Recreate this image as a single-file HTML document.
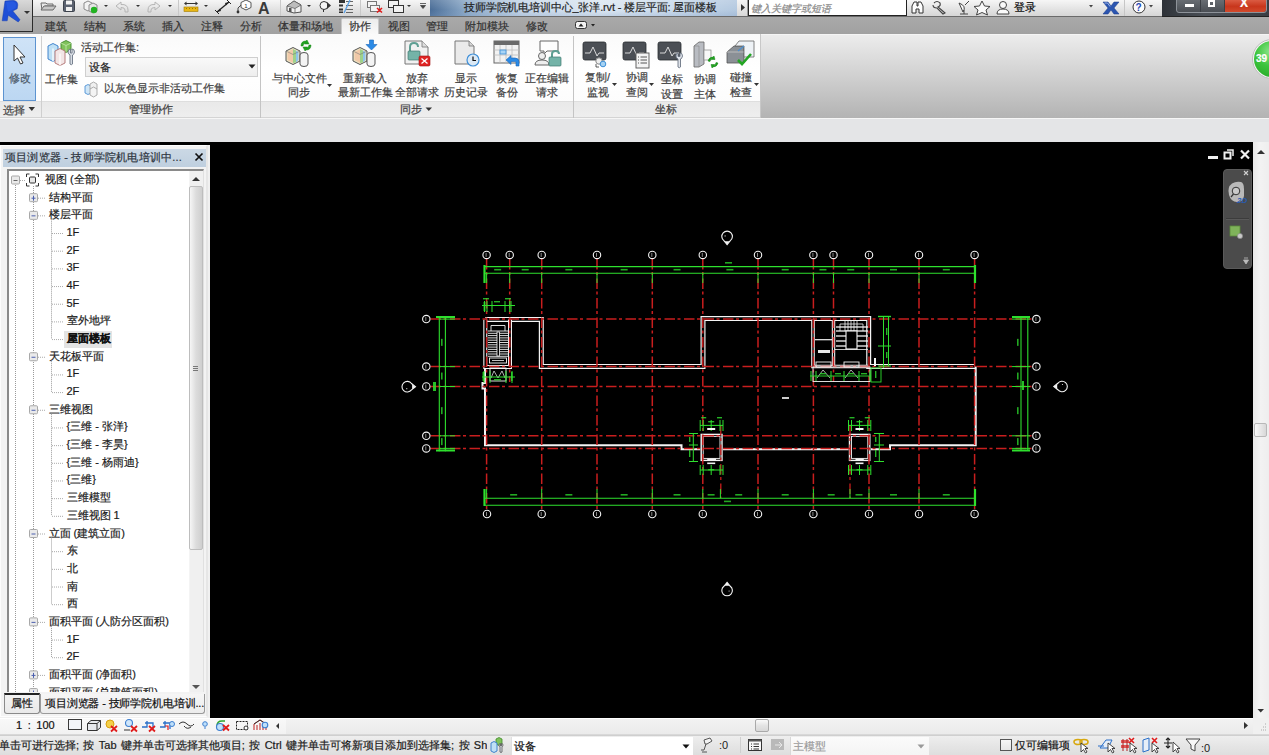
<!DOCTYPE html>
<html><head><meta charset="utf-8">
<style>
*{box-sizing:border-box}
html,body{margin:0;padding:0;width:1269px;height:755px;overflow:hidden;background:#000;font-family:"Liberation Sans",sans-serif;font-size:11px;color:#222}
.a{position:absolute}
.t{position:absolute;white-space:nowrap;line-height:13px;-webkit-text-stroke:0.2px}
svg{position:absolute;overflow:visible}
</style></head><body>
<div class="a" style="left:0;top:0;width:1269px;height:755px;overflow:hidden">
<!-- QAT bar -->
<div class="a" style="left:0;top:0;width:1269px;height:17px;background:linear-gradient(#f6f6f6,#e2e2e2 60%,#d6d6d6);border-bottom:1px solid #6a6a6a"></div>
<!-- QAT icons -->
<svg style="left:33px;top:0" width="400" height="17" viewBox="0 0 400 17">
 <!-- open folder -->
 <path d="M8 3 L13 3 L14 4 L20 4 L20 6 L12 6 L9 10 Z" fill="#e8e8e8" stroke="#6b6b6b" stroke-width="1"/>
 <path d="M8 10 L11 6 L23 6 L20 10 Z" fill="#c8c8c8" stroke="#6b6b6b" stroke-width="1"/>
 <!-- save -->
 <rect x="30.5" y="0.5" width="11" height="11" rx="1" fill="#5b6270" stroke="#3c424c"/>
 <rect x="33" y="0.5" width="6" height="4" fill="#f4f4f4"/>
 <rect x="33" y="7" width="6" height="4" fill="#f0f0f0"/>
 <!-- sync -->
 <path d="M51 3 L55 1 L59 3 L59 9 L55 11 L51 9 Z" fill="#f2f2f2" stroke="#8a8a8a"/>
 <path d="M56 5 L60 3 L64 5 L64 11 L60 13 L56 11 Z" fill="#e6e6e6" stroke="#8a8a8a"/>
 <circle cx="61" cy="10" r="3.2" fill="#21b321"/>
 <path d="M71 5 L75 5 L73 7 Z" fill="#333"/>
 <!-- undo -->
 <path d="M83 6 L88 2 L88 4.5 Q95 4 95 10 L95 12 L92 12 L92 10 Q92 7.5 88 7.5 L88 10 Z" fill="none" stroke="#b5b5b5" stroke-width="1"/>
 <path d="M103 5 L107 5 L105 7 Z" fill="#333"/>
 <!-- redo -->
 <path d="M127 6 L122 2 L122 4.5 Q115 4 115 10 L115 12 L118 12 L118 10 Q118 7.5 122 7.5 L122 10 Z" fill="none" stroke="#b5b5b5" stroke-width="1"/>
 <path d="M135 5 L139 5 L137 7 Z" fill="#333"/>
 <line x1="145.5" y1="0" x2="145.5" y2="16" stroke="#c9c9c9"/>
 <!-- aligned dim -->
 <rect x="151" y="7" width="14" height="4.5" fill="#e8b614" stroke="#a07a00" stroke-width="0.6"/>
 <path d="M153 8.5 L154 8.5 M156 8.5 L157 8.5 M159 8.5 L160 8.5 M162 8.5 L163 8.5" stroke="#a07a00"/>
 <line x1="152" y1="3.5" x2="164" y2="3.5" stroke="#333" stroke-width="1"/>
 <path d="M151 3.5 L153.5 1.5 L153.5 5.5 Z M165 3.5 L162.5 1.5 L162.5 5.5 Z" fill="#333"/>
 <path d="M171 5 L175 5 L173 7 Z" fill="#333"/>
 <!-- linear dim -->
 <line x1="184" y1="12" x2="196" y2="2" stroke="#222" stroke-width="1.2"/>
 <path d="M184 12 L187 8.5 L188 11 Z M196 2 L193 5.5 L192 3 Z" fill="#222"/>
 <line x1="182" y1="10" x2="186" y2="14" stroke="#222"/>
 <line x1="194" y1="0" x2="198" y2="4" stroke="#222"/>
 <!-- tag -->
 <path d="M205 13 L205 8 L208 5" fill="none" stroke="#444" stroke-width="1"/>
 <circle cx="205" cy="12" r="1.4" fill="#333"/>
 <path d="M208 2.5 L213 0 L218 2.5 L218 7.5 L213 10 L208 7.5 Z" fill="#fff" stroke="#555"/>
 <text x="211.3" y="8" font-family="Liberation Sans" font-size="6" fill="#333">1</text>
 <!-- A text -->
 <text x="225" y="14" font-family="Liberation Sans" font-weight="bold" font-size="16" fill="#3a3a3a">A</text>
 <line x1="247.5" y1="0" x2="247.5" y2="16" stroke="#c9c9c9"/>
 <!-- house 3D -->
 <path d="M254 6 L261 1 L268 5 L268 12 L261 13 L254 11 Z" fill="#f1f1f1" stroke="#555"/>
 <path d="M254 6 L261 1 L268 5 L262 8.5 Z" fill="#bdbdbd" stroke="#555" stroke-width="0.7"/>
 <path d="M262 8.5 L262 13" stroke="#555" stroke-width="0.7"/>
 <rect x="256" y="8" width="2.5" height="4" fill="#555"/>
 <path d="M274 5 L278 5 L276 7 Z" fill="#333"/>
 <!-- section -->
 <circle cx="291" cy="5.5" r="4" fill="#f4f4f4" stroke="#333"/>
 <path d="M294 2 L298 5.5 L294 9 Z" fill="#333"/>
 <line x1="290.5" y1="9.5" x2="290.5" y2="12" stroke="#333"/>
 <!-- thin lines -->
 <rect x="306" y="0" width="6" height="3" fill="#333"/>
 <rect x="306" y="4.5" width="4" height="2" fill="#333"/>
 <rect x="306" y="8.5" width="4" height="2" fill="#333"/>
 <rect x="306" y="11.5" width="4" height="1.5" fill="#333"/>
 <line x1="313" y1="1.5" x2="320" y2="1.5" stroke="#666"/><line x1="313" y1="5.5" x2="320" y2="5.5" stroke="#666"/><line x1="313" y1="9.5" x2="320" y2="9.5" stroke="#666"/><line x1="313" y1="12.5" x2="320" y2="12.5" stroke="#666"/>
 <line x1="317" y1="0" x2="311" y2="13" stroke="#5aa0e6" stroke-width="1.3"/>
 <line x1="327.5" y1="0" x2="327.5" y2="16" stroke="#c9c9c9"/>
 <!-- close hidden -->
 <rect x="334.5" y="1.5" width="9" height="6" fill="#f4f4f4" stroke="#777"/>
 <rect x="337.5" y="5.5" width="9" height="6" fill="#f4f4f4" stroke="#777"/>
 <path d="M344 8 L349 12.5 M349 8 L344 12.5" stroke="#e01818" stroke-width="1.6"/>
 <!-- switch windows -->
 <rect x="355.5" y="0.5" width="10" height="7" fill="#f2f2f2" stroke="#333"/>
 <rect x="360.5" y="5.5" width="10" height="7" fill="#f2f2f2" stroke="#333"/>
 <path d="M374 5 L378 5 L376 7 Z" fill="#333"/>
 <path d="M387 3.5 L393 3.5 M387.5 5.5 L392.5 5.5 L390 8.5 Z" stroke="#444" fill="#444" stroke-width="0.8"/>
</svg>
<!-- title area -->
<div class="a" style="left:430px;top:0;width:307px;height:16px;background:linear-gradient(90deg,#4a6d97 0%,#8eabc9 12%,#c7d7e8 30%,#dde8f2 55%,#cfdeee 75%,#b4c9e0 100%)"></div>
<div class="a" style="left:430px;top:0;width:307px;height:16px;background:linear-gradient(rgba(255,255,255,0.15),rgba(255,255,255,0) 60%,rgba(120,150,190,0.25))"></div>
<div class="t" style="left:464px;top:1px;font-size:11px;color:#262626;letter-spacing:-0.15px">技师学院机电培训中心_张洋.rvt - 楼层平面: 屋面楼板</div>
<!-- search -->
<div class="a" style="left:737px;top:0;width:11px;height:16px;background:linear-gradient(#f4f4f4,#d8d8d8);border-right:1px solid #999"></div>
<svg style="left:737px;top:0" width="11" height="16"><path d="M4 4 L8 7.5 L4 11 Z" fill="#333"/></svg>
<div class="a" style="left:748px;top:0;width:159px;height:16px;background:#fff;border:1px solid #222;border-top:none"></div>
<div class="t" style="left:751px;top:2px;font-size:10px;color:#8a8a8a;font-style:italic">键入关键字或短语</div>
<!-- right tool icons -->
<svg style="left:907px;top:0" width="256" height="17" viewBox="0 0 256 17">
 <!-- binoculars -->
 <path d="M5 13 L5 6 L7 2 L10 2 L10 6 L11 6 L11 2 L14 2 L16 6 L16 13 L12 13 L12 9 L9 9 L9 13 Z" fill="#fdfdfd" stroke="#333" stroke-width="1"/>
 <!-- wrench key -->
 <path d="M27 3 Q30 0 33 3 Q34 6 31 7 L38 13 L36 14 L30 8 Q26 8 26 5" fill="none" stroke="#444" stroke-width="1.1"/>
 <!-- satellite -->
 <path d="M52 3 Q60 6 56 12 Z" fill="#f7f7f7" stroke="#444"/>
 <path d="M53 14 L61 14 M57 10 L57 14 M58 5 L62 1" stroke="#444" fill="none"/>
 <!-- star -->
 <path d="M75 1 L77.5 6 L83 6.5 L79 10 L80.5 15 L75 12.5 L69.5 15 L71 10 L67 6.5 L72.5 6 Z" fill="#fafafa" stroke="#444" stroke-width="1"/>
 <!-- person -->
 <circle cx="96" cy="5" r="3.5" fill="#fafafa" stroke="#444"/>
 <path d="M90 14 Q90 9 96 9 Q102 9 102 14 Z" fill="#fafafa" stroke="#444"/>
</svg>
<div class="t" style="left:1014px;top:1px;font-size:11px;color:#111">登录</div>
<svg style="left:1085px;top:0" width="80" height="17" viewBox="0 0 80 17">
 <path d="M4 5 L8 5 L6 7.5 Z" fill="#444"/>
 <!-- X exchange -->
 <path d="M18 2 L23 2 L26 6 L29 2 L34 2 L29 8 L34 14 L29 14 L26 10 L23 14 L18 14 L23 8 Z" fill="#2b55b0" stroke="#1a3a88" stroke-width="0.5"/>
 <path d="M19.5 3 L22.5 3 L25 6.5" stroke="#9db4e6" fill="none" stroke-width="1"/>
 <line x1="39.5" y1="0" x2="39.5" y2="16" stroke="#c6c6c6"/>
 <circle cx="54" cy="7" r="6" fill="#fcfcfc" stroke="#333" stroke-width="1"/>
 <text x="50.6" y="11" font-family="Liberation Sans" font-weight="bold" font-size="10" fill="#1f48b8">?</text>
 <path d="M64 5 L68 5 L66 7.5 Z" fill="#444"/>
</svg>
<!-- window controls -->
<div class="a" style="left:1162px;top:0;width:107px;height:17px;background:linear-gradient(90deg,#2e3238,#4a4f56 40%,#3a3e44);border-bottom:1px solid #222"></div>
<div class="a" style="left:1176px;top:-3px;width:91px;height:16px;border:1px solid #8d9299;border-radius:3px;background:linear-gradient(#6d7278,#4a4e54)"></div>
<div class="a" style="left:1225px;top:-2px;width:41px;height:14px;border-radius:0 2px 3px 0;background:linear-gradient(#e0674f,#c8361c 60%,#d24a2c)"></div>
<div class="a" style="left:1200px;top:-2px;width:1px;height:14px;background:#3b3f45"></div>
<div class="a" style="left:1224px;top:-2px;width:1px;height:14px;background:#3b3f45"></div>
<div class="a" style="left:1185px;top:4px;width:9px;height:3px;background:#fff"></div>
<div class="a" style="left:1208px;top:0px;width:7px;height:7px;border:2px solid #fff;border-top-width:2px"></div>
<div class="t" style="left:1240px;top:-3px;font-size:12px;font-weight:bold;color:#fff">X</div>
<!-- tabs row -->
<div class="a" style="left:0;top:17px;width:1269px;height:17px;background:linear-gradient(#a9a9a9,#a1a1a1)"></div>
<div class="a" style="left:341px;top:18px;width:38px;height:17px;background:linear-gradient(#ececec,#fafafa);border:1px solid #c8c8c8;border-bottom:none;border-radius:2px 2px 0 0"></div>
<div class="t" style="left:45px;top:20px;color:#333">建筑</div>
<div class="t" style="left:84px;top:20px;color:#333">结构</div>
<div class="t" style="left:123px;top:20px;color:#333">系统</div>
<div class="t" style="left:162px;top:20px;color:#333">插入</div>
<div class="t" style="left:201px;top:20px;color:#333">注释</div>
<div class="t" style="left:240px;top:20px;color:#333">分析</div>
<div class="t" style="left:278px;top:20px;color:#333">体量和场地</div>
<div class="t" style="left:349px;top:20px;color:#333">协作</div>
<div class="t" style="left:388px;top:20px;color:#333">视图</div>
<div class="t" style="left:426px;top:20px;color:#333">管理</div>
<div class="t" style="left:465px;top:20px;color:#333">附加模块</div>
<div class="t" style="left:526px;top:20px;color:#333">修改</div>
<svg style="left:574px;top:19px" width="30" height="12" viewBox="0 0 30 12">
 <rect x="1.5" y="2.5" width="11" height="7" rx="2" fill="#f4f4f4" stroke="#333"/>
 <path d="M4.5 7.5 L7 4.5 L9.5 7.5 Z" fill="#222"/>
 <path d="M17 5 L21 5 L19 7.5 Z" fill="#222"/>
</svg>

<!-- R button -->
<div class="a" style="left:0;top:0;width:33px;height:32px;background:linear-gradient(#d9d9d9,#bdbdbd 50%,#a8a8a8);border-right:1px solid #2a2a2a;border-bottom:1px solid #2a2a2a"></div>
<svg style="left:0;top:0" width="33" height="32" viewBox="0 0 33 32">
 <path d="M5 1 L13 0.3 Q17.8 1 17.8 5 L17.2 8.7 L12.8 11 L20 19.8 L18.2 22 L8.2 15.2 L7.2 20.8 L2.2 20.8 Z" fill="#1f4fd6" stroke="#163fae" stroke-width="0.5"/>
 <path d="M6 2 L12.5 1.5 Q16 2 16 5 L15.5 8 L12 10 L8 12 Z" fill="#2a5ee6" opacity="0.7"/>
 <path d="M24 11 L30 11 L27 14 Z" fill="#333"/>
</svg>

<!-- ribbon background -->
<div class="a" style="left:0;top:34px;width:1269px;height:84px;background:linear-gradient(#ececec,#d0d0d0 50%,#b3b3b3);border-top:1px solid #f4f4f4"></div>
<div class="a" style="left:0;top:34px;width:761px;height:84px;background:linear-gradient(#fafafa,#ffffff 40%,#fbfbfb)"></div>
<div class="a" style="left:0;top:101px;width:761px;height:17px;background:linear-gradient(#e9e9e9,#eeeeee);border-top:1px solid #dedede;border-bottom:1px solid #d4d4d4"></div>
<div class="a" style="left:41px;top:36px;width:1px;height:82px;background:#cfcfcf"></div>
<div class="a" style="left:260px;top:36px;width:1px;height:82px;background:#c4c4c4"></div>
<div class="a" style="left:573px;top:36px;width:1px;height:82px;background:#c4c4c4"></div>
<div class="a" style="left:760px;top:34px;width:1px;height:84px;background:#c8c8c8"></div>
<!-- modify button -->
<div class="a" style="left:3px;top:37px;width:33px;height:64px;background:linear-gradient(#cfe3f7,#bcd7f2);border:1px solid #5c93d0"></div>
<svg style="left:3px;top:37px" width="33" height="64" viewBox="0 0 33 64">
 <path d="M11 8 L11 24 L14.5 21 L17.5 27 L20 26 L17 20 L22 20 Z" fill="#fff" stroke="#333" stroke-width="1"/>
</svg>
<div class="t" style="left:9px;top:72px;color:#4a5868">修改</div>
<div class="t" style="left:3px;top:104px;color:#3f3f3f">选择</div>
<svg style="left:28px;top:106px" width="8" height="6"><path d="M0.5 1 L7 1 L3.8 5 Z" fill="#333"/></svg>
<!-- worksets icon -->
<svg style="left:46px;top:39px" width="32" height="28" viewBox="0 0 32 28">
 <path d="M15 4 L20 1.5 L25 4 L25 11 L20 13.5 L15 11 Z" fill="#7fc25a" stroke="#3f8a2a" stroke-width="0.9"/>
 <path d="M15 4 L20 6.5 L25 4 M20 6.5 L20 13.5" stroke="#c8eab0" fill="none" stroke-width="0.8"/>
 <path d="M2 7 L7 4.5 L12 7 L12 20 L7 22.5 L2 20 Z" fill="#bfe0f5" stroke="#2f78c8" stroke-width="0.9"/>
 <path d="M7 9.5 L7 22.5" stroke="#fff" stroke-width="1.2"/>
 <path d="M9 12 L14 9.5 L19 12 L19 24 L14 26.5 L9 24 Z" fill="#f3e6e6" stroke="#b07070" stroke-width="0.9"/>
 <path d="M14 14.5 L14 26.5" stroke="#fff" stroke-width="1.2"/>
 <path d="M22 13 Q22 10 24.5 10 L24.5 14 L26 14 L26 10 Q28.5 10 28.5 13 Q28.5 15 26.5 16 L26.5 25 Q25.3 26.5 24 25 L24 16 Q22 15 22 13 Z" fill="#d8dde4" stroke="#6b7585" stroke-width="0.9"/>
</svg>
<div class="t" style="left:45px;top:73px;color:#3f3f3f">工作集</div>
<div class="t" style="left:81px;top:41px;color:#3f3f3f">活动工作集:</div>
<div class="a" style="left:85px;top:57px;width:173px;height:20px;background:linear-gradient(#f9f9f9,#eeeeee);border:1px solid #cfcfcf"></div>
<div class="t" style="left:89px;top:61px;color:#222">设备</div>
<svg style="left:248px;top:64px" width="8" height="6"><path d="M0.5 0.5 L7.5 0.5 L4 4.5 Z" fill="#222"/></svg>
<svg style="left:84px;top:81px" width="18" height="16" viewBox="0 0 18 16">
 <path d="M1 5 L4 3.5 L7 5 L7 12 L4 13.5 L1 12 Z" fill="#cfe6f7" stroke="#3d86d0" stroke-width="0.8"/>
 <path d="M6 3 L9.5 1 L13 3 L13 8 L9.5 10 L6 8 Z" fill="#f0f0f0" stroke="#9a9a9a" stroke-width="0.8"/>
 <path d="M6 8 L9.5 6 L13 8 L13 14 L9.5 16 L6 14 Z" fill="#f4f4f4" stroke="#9a9a9a" stroke-width="0.8"/>
</svg>
<div class="t" style="left:104px;top:82px;color:#444">以灰色显示非活动工作集</div>
<div class="t" style="left:129px;top:103px;color:#3f3f3f">管理协作</div>

<!-- sync panel icons -->
<svg style="left:261px;top:37px" width="312" height="34" viewBox="0 0 312 34">
 <!-- sync with central: x 286-312 -->
 <g transform="translate(24,3)">
  <path d="M1 11 L8 7.5 L15 11 L15 21 L8 24.5 L1 21 Z" fill="#ece6c6" stroke="#555" stroke-width="1"/>
  <path d="M2.5 12 L8 9 L8 23 L2.5 20 Z" fill="#f1c9a8"/>
  <path d="M8 9 L11 10.5 L11 22.5 L8 23 Z" fill="#9fd18a"/>
  <path d="M11 10.5 L13.5 12 L13.5 20 L11 22.5 Z" fill="#8fc4ea"/>
  <path d="M1 11 L8 14.5 L15 11" stroke="#777" stroke-width="0.6" fill="none"/>
  <path d="M15 15 Q15 12.5 19 12.5 Q23 12.5 23 15 L23 24 Q23 26.5 19 26.5 Q15 26.5 15 24 Z" fill="#f4f4f4" stroke="#555" stroke-width="1"/>
  <path d="M16 6 Q16 1 21 1 L22 0 L24 4 L19.5 4 L20.5 3 Q18.5 3 18 6 Z" fill="#1fa31f" stroke="#128012" stroke-width="0.5"/>
  <path d="M26 5 Q26 10 21 10 L20 11 L18 7 L22.5 7 L21.5 8 Q23.5 8 24 5 Z" fill="#1fa31f" stroke="#128012" stroke-width="0.5"/>
 </g>
 <!-- reload latest: x 354-381 -->
 <g transform="translate(91,3)">
  <path d="M1 11 L8 7.5 L15 11 L15 21 L8 24.5 L1 21 Z" fill="#ece6c6" stroke="#555" stroke-width="1"/>
  <path d="M2.5 12 L8 9 L8 23 L2.5 20 Z" fill="#f1c9a8"/>
  <path d="M8 9 L11 10.5 L11 22.5 L8 23 Z" fill="#9fd18a"/>
  <path d="M11 10.5 L13.5 12 L13.5 20 L11 22.5 Z" fill="#8fc4ea"/>
  <path d="M1 11 L8 14.5 L15 11" stroke="#777" stroke-width="0.6" fill="none"/>
  <path d="M15 15 Q15 12.5 19 12.5 Q23 12.5 23 15 L23 24 Q23 26.5 19 26.5 Q15 26.5 15 24 Z" fill="#f4f4f4" stroke="#555" stroke-width="1"/>
  <path d="M17.5 0 L21.5 0 L21.5 4.5 L25 4.5 L19.5 10 L14 4.5 L17.5 4.5 Z" fill="#2a8ae6" stroke="#1a64b8" stroke-width="0.6"/>
 </g>
 <!-- relinquish: x 404-430 -->
 <g transform="translate(143,3)">
  <path d="M1 1 L18 1 L24 7 L24 24 L1 24 Z" fill="#f1f1f1" stroke="#777" stroke-width="1"/>
  <path d="M18 1 L18 7 L24 7" fill="#ddd" stroke="#777" stroke-width="0.8"/>
  <path d="M6 11 L6 7 Q6 3 10 3 Q14 3 14 7" fill="none" stroke="#5e9e92" stroke-width="2"/>
  <rect x="4" y="11" width="12" height="9" rx="1" fill="#74b3a8" stroke="#3f7a70" stroke-width="0.7"/>
  <rect x="15" y="16" width="11" height="10" rx="1.5" fill="#e02424" stroke="#a01010" stroke-width="0.6"/>
  <path d="M17.5 18.5 L23.5 23.5 M23.5 18.5 L17.5 23.5" stroke="#fff" stroke-width="1.3"/>
 </g>
 <!-- show history: x 453-480 -->
 <g transform="translate(192,3)">
  <path d="M2 1 L16 1 L21 6 L21 24 L2 24 Z" fill="#eaeaea" stroke="#777" stroke-width="1"/>
  <path d="M16 1 L16 6 L21 6" fill="#d5d5d5" stroke="#777" stroke-width="0.8"/>
  <circle cx="20" cy="20" r="6" fill="#dbe9f5" stroke="#3f8fd8" stroke-width="1.2"/>
  <path d="M20 16.5 L20 20.5 L23 20.5" stroke="#111" stroke-width="1.2" fill="none"/>
 </g>
 <!-- restore backup: x 493-520 -->
 <g transform="translate(232,3)">
  <rect x="1" y="1" width="25" height="22" fill="#f2f2f2" stroke="#666" stroke-width="1"/>
  <rect x="1" y="1" width="25" height="4" fill="#6a6a6a"/>
  <path d="M1 10 L26 10 M1 15 L26 15 M7 5 L7 23 M13 5 L13 23 M19 5 L19 23" stroke="#bdbdbd" stroke-width="0.8"/>
  <rect x="7" y="10" width="6" height="4" fill="#a9d4f5" stroke="#3d8fd6" stroke-width="0.8"/>
  <path d="M13 20 L18 15.5 L18 18 L22 18 Q26 18 26 22 L26 26 L23 26 L23 22.5 Q23 21.5 22 21.5 L18 21.5 L18 24.5 Z" fill="#2a8ae6" stroke="#1a64b8" stroke-width="0.6"/>
 </g>
 <!-- editing requests: x 533-561 -->
 <g transform="translate(272,3)">
  <path d="M7 1 L25 1 L25 11 L14 11 L11 14 L11 11 L7 11 Z" fill="#fdfdfd" stroke="#666" stroke-width="1"/>
  <circle cx="9" cy="16" r="3.5" fill="#eee" stroke="#666"/>
  <path d="M2 25 Q2 20 9 20 Q16 20 16 25 Z" fill="#eee" stroke="#666"/>
  <path d="M19 17 L19 14 Q19 11 22.5 11 Q26 11 26 14" fill="none" stroke="#5e9e92" stroke-width="2"/>
  <rect x="16" y="17" width="12" height="9" rx="1" fill="#74b3a8" stroke="#3f7a70" stroke-width="0.7"/>
 </g>
</svg>
<div class="t" style="left:272px;top:72px;color:#3f3f3f">与中心文件</div>
<div class="t" style="left:288px;top:86px;color:#3f3f3f">同步</div>
<svg style="left:327px;top:84px" width="6" height="4"><path d="M0 0 L5 0 L2.5 3 Z" fill="#333"/></svg>
<div class="t" style="left:343px;top:72px;color:#3f3f3f">重新载入</div>
<div class="t" style="left:338px;top:86px;color:#3f3f3f">最新工作集</div>
<div class="t" style="left:406px;top:72px;color:#3f3f3f">放弃</div>
<div class="t" style="left:395px;top:86px;color:#3f3f3f">全部请求</div>
<div class="t" style="left:455px;top:72px;color:#3f3f3f">显示</div>
<div class="t" style="left:444px;top:86px;color:#3f3f3f">历史记录</div>
<div class="t" style="left:496px;top:72px;color:#3f3f3f">恢复</div>
<div class="t" style="left:496px;top:86px;color:#3f3f3f">备份</div>
<div class="t" style="left:525px;top:72px;color:#3f3f3f">正在编辑</div>
<div class="t" style="left:536px;top:86px;color:#3f3f3f">请求</div>
<div class="t" style="left:400px;top:103px;color:#3f3f3f">同步</div>
<svg style="left:425px;top:107px" width="8" height="5"><path d="M0.5 0.5 L7 0.5 L3.8 4 Z" fill="#333"/></svg>

<!-- coordinates panel icons -->
<svg style="left:574px;top:37px" width="190" height="34" viewBox="0 0 190 34">
 <g transform="translate(9,5)">
  <rect x="0" y="0" width="23" height="18" rx="2" fill="#4b4f55" stroke="#2a2d31" stroke-width="0.8"/>
  <path d="M2 11 L7 11 L10 5 L14 14 L16 11 L21 11" stroke="#e8e8e8" stroke-width="0.9" fill="none"/>
  <circle cx="16" cy="19" r="3.2" fill="#eee" stroke="#888"/>
  <circle cx="20" cy="22" r="2.8" fill="#a6d2f2" stroke="#3d8fd6"/>
  <path d="M13 22 L13 25 L16 25" stroke="#333" fill="none" stroke-width="0.8"/>
 </g>
 <g transform="translate(49,5)">
  <rect x="0" y="0" width="23" height="18" rx="2" fill="#4b4f55" stroke="#2a2d31" stroke-width="0.8"/>
  <path d="M2 11 L7 11 L10 5 L14 14 L16 11 L21 11" stroke="#e8e8e8" stroke-width="0.9" fill="none"/>
  <rect x="13" y="11" width="13" height="15" fill="#f4f4f4" stroke="#555" stroke-width="0.9"/>
  <path d="M15 15 L16 15 M17.5 15 L24 15 M15 18 L16 18 M17.5 18 L24 18 M15 21 L16 21 M17.5 21 L24 21" stroke="#444" stroke-width="0.9"/>
 </g>
 <g transform="translate(84,5)">
  <rect x="0" y="0" width="23" height="18" rx="2" fill="#4b4f55" stroke="#2a2d31" stroke-width="0.8"/>
  <path d="M2 11 L7 11 L10 5 L14 14 L16 11 L21 11" stroke="#e8e8e8" stroke-width="0.9" fill="none"/>
  <path d="M18 14 Q18 11 20 11 L20 14.5 L22 14.5 L22 11 Q24.5 11 24.5 14 Q24.5 16 22.5 17 L22.5 25 Q21.3 26.5 20 25 L20 17 Q18 16 18 14 Z" fill="#dfe3ea" stroke="#6b7585" stroke-width="0.9"/>
 </g>
 <g transform="translate(118,3)">
  <path d="M2 6 L7 2 L12 2 L12 24 L7 27 L2 27 Z" fill="#b9bcc2" stroke="#666" stroke-width="0.8"/>
  <path d="M2 6 L7 6 L7 27" fill="none" stroke="#888" stroke-width="0.6"/>
  <rect x="12" y="10" width="7" height="10" fill="#f8f8f8" stroke="#888" stroke-width="0.7"/>
  <path d="M16 21 Q17 17 21 17 L22 16 L23 19.5 L19.5 19.5 L20.5 18.5 Q18.5 18.5 18 21.5 Z M26 23 Q25 27 21 27 L20 28 L19 24.5 L22.5 24.5 L21.5 25.5 Q23.5 25.5 24 22.5 Z" fill="#1fa31f" stroke="#128012" stroke-width="0.5"/>
 </g>
 <g transform="translate(152,3)">
  <path d="M1 12 L8 6 L18 6 L18 23 L1 23 Z" fill="#8b9096" stroke="#555" stroke-width="0.8"/>
  <path d="M1 12 L18 12" stroke="#c8c8c8" stroke-width="0.8"/>
  <path d="M9 6 L13 1 L28 1 L28 17 L18 17 L18 6 Z" fill="#eef2f6" stroke="#666" stroke-width="0.8"/>
  <path d="M12 11 L18 6" stroke="#4a8fd0" stroke-width="1.2"/>
  <path d="M12 20 L16 24 L25 14" stroke="#24a524" stroke-width="2.6" fill="none"/>
 </g>
</svg>
<div class="t" style="left:585px;top:71px;color:#3f3f3f">复制/</div>
<div class="t" style="left:587px;top:86px;color:#3f3f3f">监视</div>
<svg style="left:612px;top:83px" width="6" height="4"><path d="M0 0 L5 0 L2.5 3 Z" fill="#333"/></svg>
<div class="t" style="left:626px;top:71px;color:#3f3f3f">协调</div>
<div class="t" style="left:626px;top:86px;color:#3f3f3f">查阅</div>
<svg style="left:649px;top:83px" width="6" height="4"><path d="M0 0 L5 0 L2.5 3 Z" fill="#333"/></svg>
<div class="t" style="left:661px;top:73px;color:#3f3f3f">坐标</div>
<div class="t" style="left:661px;top:88px;color:#3f3f3f">设置</div>
<div class="t" style="left:694px;top:73px;color:#3f3f3f">协调</div>
<div class="t" style="left:694px;top:88px;color:#3f3f3f">主体</div>
<div class="t" style="left:730px;top:71px;color:#3f3f3f">碰撞</div>
<div class="t" style="left:730px;top:86px;color:#3f3f3f">检查</div>
<svg style="left:754px;top:83px" width="6" height="4"><path d="M0 0 L5 0 L2.5 3 Z" fill="#333"/></svg>
<div class="t" style="left:655px;top:103px;color:#3f3f3f">坐标</div>
<!-- green badge -->
<div class="a" style="left:1252px;top:39px;width:40px;height:40px;border-radius:50%;background:#f4f4f4;border:1px solid #bdbdbd"></div><div class="a" style="left:1254px;top:41px;width:36px;height:36px;border-radius:50%;background:radial-gradient(circle at 45% 30%,#8be68b,#3cc43c 45%,#22a022)"></div>
<div class="t" style="left:1256px;top:52px;font-size:10px;font-weight:bold;color:#fff">39</div>
<!-- options bar -->
<div class="a" style="left:0;top:118px;width:1269px;height:24px;background:#e4e5e7;border-top:1px solid #f6f6f6"></div>

<!-- project browser -->
<div class="a" style="left:0;top:145px;width:210px;height:573px;background:#f0f0f0"></div>
<div class="a" style="left:0;top:145px;width:208px;height:572px;background:#f3f3f3;border:1px solid #fdfdfd;border-right:2px solid #e6e6e6"></div>
<div class="a" style="left:3px;top:149px;width:203px;height:18px;background:linear-gradient(#cbd8e5,#bfcfdf)"></div>
<div class="t" style="left:5px;top:151px;color:#2e3540;letter-spacing:0.2px">项目浏览器 - 技师学院机电培训中...</div>
<svg style="left:194px;top:152px" width="10" height="10" viewBox="0 0 10 10"><path d="M1.5 1.5 L8.5 8.5 M8.5 1.5 L1.5 8.5" stroke="#111" stroke-width="1.7"/></svg>
<div class="a" style="left:7px;top:169px;width:197px;height:523px;background:#fff;border-top:2px solid #8a8a8a;border-left:2px solid #8a8a8a;border-right:1px solid #e0e0e0;overflow:hidden">
<div class="t" style="left:36px;top:2.0px;color:#1a1a1a">视图 (全部)</div>
<div class="t" style="left:39.5px;top:19.67500000000001px;color:#1a1a1a">结构平面</div>
<div class="t" style="left:39.5px;top:37.349999999999994px;color:#1a1a1a">楼层平面</div>
<div class="t" style="left:57.5px;top:55.025000000000006px;color:#1a1a1a">1F</div>
<div class="t" style="left:57.5px;top:72.69999999999999px;color:#1a1a1a">2F</div>
<div class="t" style="left:57.5px;top:90.375px;color:#1a1a1a">3F</div>
<div class="t" style="left:57.5px;top:108.05000000000001px;color:#1a1a1a">4F</div>
<div class="t" style="left:57.5px;top:125.72500000000002px;color:#1a1a1a">5F</div>
<div class="t" style="left:57.5px;top:143.39999999999998px;color:#1a1a1a">室外地坪</div>
<div class="a" style="left:55px;top:159.57500000000005px;width:48px;height:17px;background:#e3e3e3"></div>
<div class="t" style="left:57.5px;top:161.07500000000005px;color:#111;font-weight:bold">屋面楼板</div>
<div class="t" style="left:39.5px;top:178.75px;color:#1a1a1a">天花板平面</div>
<div class="t" style="left:57.5px;top:196.425px;color:#1a1a1a">1F</div>
<div class="t" style="left:57.5px;top:214.10000000000002px;color:#1a1a1a">2F</div>
<div class="t" style="left:39.5px;top:231.77499999999998px;color:#1a1a1a">三维视图</div>
<div class="t" style="left:57.5px;top:249.45000000000005px;color:#1a1a1a">{三维 - 张洋}</div>
<div class="t" style="left:57.5px;top:267.125px;color:#1a1a1a">{三维 - 李昊}</div>
<div class="t" style="left:57.5px;top:284.8px;color:#1a1a1a">{三维 - 杨雨迪}</div>
<div class="t" style="left:57.5px;top:302.475px;color:#1a1a1a">{三维}</div>
<div class="t" style="left:57.5px;top:320.15000000000003px;color:#1a1a1a">三维模型</div>
<div class="t" style="left:57.5px;top:337.82500000000005px;color:#1a1a1a">三维视图 1</div>
<div class="t" style="left:39.5px;top:355.5px;color:#1a1a1a">立面 (建筑立面)</div>
<div class="t" style="left:57.5px;top:373.17499999999995px;color:#1a1a1a">东</div>
<div class="t" style="left:57.5px;top:390.85px;color:#1a1a1a">北</div>
<div class="t" style="left:57.5px;top:408.5250000000001px;color:#1a1a1a">南</div>
<div class="t" style="left:57.5px;top:426.20000000000005px;color:#1a1a1a">西</div>
<div class="t" style="left:39.5px;top:443.875px;color:#1a1a1a">面积平面 (人防分区面积)</div>
<div class="t" style="left:57.5px;top:461.54999999999995px;color:#1a1a1a">1F</div>
<div class="t" style="left:57.5px;top:479.225px;color:#1a1a1a">2F</div>
<div class="t" style="left:39.5px;top:496.9000000000001px;color:#1a1a1a">面积平面 (净面积)</div>
<div class="t" style="left:39.5px;top:514.575px;color:#1a1a1a">面积平面 (总建筑面积)</div>
<svg style="left:0;top:0" width="197" height="523"><line x1="6.5" y1="14.0" x2="6.5" y2="536.575" stroke="#9a9a9a" stroke-dasharray="1 1"/><line x1="24.5" y1="15.0" x2="24.5" y2="527.575" stroke="#9a9a9a" stroke-dasharray="1 1"/><line x1="42.5" y1="48.349999999999994" x2="42.5" y2="168.07500000000005" stroke="#9a9a9a" stroke-dasharray="1 1"/><line x1="42.5" y1="189.75" x2="42.5" y2="221.10000000000002" stroke="#9a9a9a" stroke-dasharray="1 1"/><line x1="42.5" y1="242.77499999999998" x2="42.5" y2="344.82500000000005" stroke="#9a9a9a" stroke-dasharray="1 1"/><line x1="42.5" y1="366.5" x2="42.5" y2="433.20000000000005" stroke="#9a9a9a" stroke-dasharray="1 1"/><line x1="42.5" y1="454.875" x2="42.5" y2="486.225" stroke="#9a9a9a" stroke-dasharray="1 1"/><rect x="2.5" y="5.0" width="8" height="8" rx="1" fill="#eaeaea" stroke="#a8a8a8"/><line x1="4.5" y1="9.5" x2="8.5" y2="9.5" stroke="#666"/><line x1="11" y1="9.5" x2="16" y2="9.5" stroke="#aaa" stroke-dasharray="1 1"/><path d="M17.5 6.0 L17.5 3.0 L20.5 3.0 M26.5 3.0 L29.5 3.0 L29.5 6.0 M29.5 12.0 L29.5 15.0 L26.5 15.0 M20.5 15.0 L17.5 15.0 L17.5 12.0" fill="none" stroke="#333" stroke-width="1"/><rect x="20.5" y="6.0" width="6" height="6" rx="1" fill="#e8e8e8" stroke="#333"/><rect x="20.5" y="22.67500000000001" width="8" height="8" rx="1" fill="#eaeaea" stroke="#a8a8a8"/><line x1="22.5" y1="27.17500000000001" x2="26.5" y2="27.17500000000001" stroke="#4b5fae"/><line x1="24.5" y1="24.67500000000001" x2="24.5" y2="29.67500000000001" stroke="#4b5fae"/><line x1="29" y1="27.17500000000001" x2="37" y2="27.17500000000001" stroke="#aaa" stroke-dasharray="1 1"/><rect x="20.5" y="40.349999999999994" width="8" height="8" rx="1" fill="#eaeaea" stroke="#a8a8a8"/><line x1="22.5" y1="44.849999999999994" x2="26.5" y2="44.849999999999994" stroke="#4b5fae"/><line x1="29" y1="44.849999999999994" x2="37" y2="44.849999999999994" stroke="#aaa" stroke-dasharray="1 1"/><line x1="43" y1="62.525000000000006" x2="55" y2="62.525000000000006" stroke="#aaa" stroke-dasharray="1 1"/><line x1="43" y1="80.19999999999999" x2="55" y2="80.19999999999999" stroke="#aaa" stroke-dasharray="1 1"/><line x1="43" y1="97.875" x2="55" y2="97.875" stroke="#aaa" stroke-dasharray="1 1"/><line x1="43" y1="115.55000000000001" x2="55" y2="115.55000000000001" stroke="#aaa" stroke-dasharray="1 1"/><line x1="43" y1="133.22500000000002" x2="55" y2="133.22500000000002" stroke="#aaa" stroke-dasharray="1 1"/><line x1="43" y1="150.89999999999998" x2="55" y2="150.89999999999998" stroke="#aaa" stroke-dasharray="1 1"/><line x1="43" y1="168.57500000000005" x2="55" y2="168.57500000000005" stroke="#aaa" stroke-dasharray="1 1"/><rect x="20.5" y="181.75" width="8" height="8" rx="1" fill="#eaeaea" stroke="#a8a8a8"/><line x1="22.5" y1="186.25" x2="26.5" y2="186.25" stroke="#4b5fae"/><line x1="29" y1="186.25" x2="37" y2="186.25" stroke="#aaa" stroke-dasharray="1 1"/><line x1="43" y1="203.925" x2="55" y2="203.925" stroke="#aaa" stroke-dasharray="1 1"/><line x1="43" y1="221.60000000000002" x2="55" y2="221.60000000000002" stroke="#aaa" stroke-dasharray="1 1"/><rect x="20.5" y="234.77499999999998" width="8" height="8" rx="1" fill="#eaeaea" stroke="#a8a8a8"/><line x1="22.5" y1="239.27499999999998" x2="26.5" y2="239.27499999999998" stroke="#4b5fae"/><line x1="29" y1="239.27499999999998" x2="37" y2="239.27499999999998" stroke="#aaa" stroke-dasharray="1 1"/><line x1="43" y1="256.95000000000005" x2="55" y2="256.95000000000005" stroke="#aaa" stroke-dasharray="1 1"/><line x1="43" y1="274.625" x2="55" y2="274.625" stroke="#aaa" stroke-dasharray="1 1"/><line x1="43" y1="292.3" x2="55" y2="292.3" stroke="#aaa" stroke-dasharray="1 1"/><line x1="43" y1="309.975" x2="55" y2="309.975" stroke="#aaa" stroke-dasharray="1 1"/><line x1="43" y1="327.65000000000003" x2="55" y2="327.65000000000003" stroke="#aaa" stroke-dasharray="1 1"/><line x1="43" y1="345.32500000000005" x2="55" y2="345.32500000000005" stroke="#aaa" stroke-dasharray="1 1"/><rect x="20.5" y="358.5" width="8" height="8" rx="1" fill="#eaeaea" stroke="#a8a8a8"/><line x1="22.5" y1="363.0" x2="26.5" y2="363.0" stroke="#4b5fae"/><line x1="29" y1="363.0" x2="37" y2="363.0" stroke="#aaa" stroke-dasharray="1 1"/><line x1="43" y1="380.67499999999995" x2="55" y2="380.67499999999995" stroke="#aaa" stroke-dasharray="1 1"/><line x1="43" y1="398.35" x2="55" y2="398.35" stroke="#aaa" stroke-dasharray="1 1"/><line x1="43" y1="416.0250000000001" x2="55" y2="416.0250000000001" stroke="#aaa" stroke-dasharray="1 1"/><line x1="43" y1="433.70000000000005" x2="55" y2="433.70000000000005" stroke="#aaa" stroke-dasharray="1 1"/><rect x="20.5" y="446.875" width="8" height="8" rx="1" fill="#eaeaea" stroke="#a8a8a8"/><line x1="22.5" y1="451.375" x2="26.5" y2="451.375" stroke="#4b5fae"/><line x1="29" y1="451.375" x2="37" y2="451.375" stroke="#aaa" stroke-dasharray="1 1"/><line x1="43" y1="469.04999999999995" x2="55" y2="469.04999999999995" stroke="#aaa" stroke-dasharray="1 1"/><line x1="43" y1="486.725" x2="55" y2="486.725" stroke="#aaa" stroke-dasharray="1 1"/><rect x="20.5" y="499.9000000000001" width="8" height="8" rx="1" fill="#eaeaea" stroke="#a8a8a8"/><line x1="22.5" y1="504.4000000000001" x2="26.5" y2="504.4000000000001" stroke="#4b5fae"/><line x1="24.5" y1="501.9000000000001" x2="24.5" y2="506.9000000000001" stroke="#4b5fae"/><line x1="29" y1="504.4000000000001" x2="37" y2="504.4000000000001" stroke="#aaa" stroke-dasharray="1 1"/><rect x="20.5" y="517.575" width="8" height="8" rx="1" fill="#eaeaea" stroke="#a8a8a8"/><line x1="22.5" y1="522.075" x2="26.5" y2="522.075" stroke="#4b5fae"/><line x1="24.5" y1="519.575" x2="24.5" y2="524.575" stroke="#4b5fae"/><line x1="29" y1="522.075" x2="37" y2="522.075" stroke="#aaa" stroke-dasharray="1 1"/></svg>
<div class="a" style="left:180px;top:0;width:14px;height:523px;background:#f0f0f0;border-left:1px solid #f4f4f4"></div>
<svg style="left:182px;top:5px" width="10" height="6"><path d="M1 5 L5 1 L9 5 Z" fill="#333"/></svg>
<div class="a" style="left:180px;top:15px;width:14px;height:364px;border:1px solid #bdbdbd;border-radius:2px;background:linear-gradient(90deg,#f6f6f6,#dcdcdc 50%,#cfcfcf)"></div>
<svg style="left:183px;top:195px" width="8" height="6"><path d="M1 0.5 L6 0.5 M1 2.5 L6 2.5 M1 4.5 L6 4.5" stroke="#777"/></svg>
<svg style="left:182px;top:513px" width="10" height="6"><path d="M1 1 L9 1 L5 5 Z" fill="#555"/></svg>
</div>
<div class="a" style="left:40px;top:694px;width:165px;height:20px;background:linear-gradient(#f6f6f6,#ececec);border:1px solid #9a9a9a;border-top:none;border-radius:0 0 3px 3px"></div>
<div class="a" style="left:4px;top:693px;width:36px;height:21px;background:linear-gradient(#f3f3f3,#e9e9e9);border:1px solid #8a8a8a;border-top:2px solid #222;border-radius:0 0 3px 3px"></div>
<div class="t" style="left:11px;top:697px;color:#111">属性</div>
<div class="t" style="left:45px;top:697px;color:#111;letter-spacing:-0.15px">项目浏览器 - 技师学院机电培训...</div>
<!-- drawing area -->
<div class="a" style="left:210px;top:142px;width:1043px;height:576px;background:#000;overflow:hidden"><div class="a" style="left:-210px;top:-142px;width:1269px;height:755px"><svg style="left:0;top:0" width="1269" height="755" viewBox="0 0 1269 755"><path d="M485.3 319.4 L541.3 319.4 L541.3 366.4 L703 366.4 L703 318.6 L868.7 318.6 L868.7 366.4 L975 366.4" stroke="#f4f4f4" stroke-width="5.0" fill="none" stroke-linejoin="miter"/>
<path d="M485.3 319.4 L541.3 319.4 L541.3 366.4 L703 366.4 L703 318.6 L868.7 318.6 L868.7 366.4 L975 366.4" stroke="#000" stroke-width="2.6" fill="none" stroke-linejoin="miter"/>
<path d="M975.7 366.4 L975.7 445.2 L890 445.2 L890 449.2 L871 449.2 M848.5 449.2 L723 449.2 M700.2 449.2 L681.5 449.2 L681.5 445.2 L485 445.2 L485 388.5 L482.5 388.5 L482.5 383 L485 383 L485 366" stroke="#f4f4f4" stroke-width="2.0" fill="none" stroke-linejoin="miter"/>
<path d="M485.3 319.4 L485.3 367 L510 367 L510 319.4" stroke="#f4f4f4" stroke-width="4.0" fill="none" />
<path d="M485.3 319.4 L485.3 367 L510 367 L510 319.4" stroke="#000" stroke-width="1.8" fill="none" />
<path d="M813 319.4 L813 366.5 L868.7 366.5" stroke="#f4f4f4" stroke-width="3.6" fill="none" />
<path d="M813 319.4 L813 366.5 L868.7 366.5" stroke="#000" stroke-width="1.4" fill="none" />
<path d="M833.5 320 L833.5 366" stroke="#f4f4f4" stroke-width="3.4" fill="none" />
<path d="M833.5 320 L833.5 366" stroke="#000" stroke-width="1.2" fill="none" />
<rect x="701.2" y="434.4" width="20.799999999999955" height="26" stroke="#f4f4f4" stroke-width="1.4" fill="none"/>
<rect x="703.2" y="436.4" width="16.799999999999955" height="22" stroke="#f4f4f4" stroke-width="0.9" fill="none"/>
<line x1="707.2" y1="459.5" x2="716" y2="459.5" stroke="#f4f4f4" stroke-width="2" />
<rect x="849.5" y="434.4" width="20.299999999999955" height="26" stroke="#f4f4f4" stroke-width="1.4" fill="none"/>
<rect x="851.5" y="436.4" width="16.299999999999955" height="22" stroke="#f4f4f4" stroke-width="0.9" fill="none"/>
<line x1="855.5" y1="459.5" x2="863.8" y2="459.5" stroke="#f4f4f4" stroke-width="2" />
<line x1="486.6" y1="259" x2="486.6" y2="510" stroke="#c81e1e" stroke-width="1.5" stroke-dasharray="10.5 2.5 3 3.5"/>
<line x1="509.7" y1="259" x2="509.7" y2="382" stroke="#c81e1e" stroke-width="1.5" stroke-dasharray="10.5 2.5 3 3.5"/>
<line x1="541.7" y1="259" x2="541.7" y2="510" stroke="#c81e1e" stroke-width="1.5" stroke-dasharray="10.5 2.5 3 3.5"/>
<line x1="597" y1="259" x2="597" y2="510" stroke="#c81e1e" stroke-width="1.5" stroke-dasharray="10.5 2.5 3 3.5"/>
<line x1="652.3" y1="259" x2="652.3" y2="510" stroke="#c81e1e" stroke-width="1.5" stroke-dasharray="10.5 2.5 3 3.5"/>
<line x1="702.8" y1="259" x2="702.8" y2="510" stroke="#c81e1e" stroke-width="1.5" stroke-dasharray="10.5 2.5 3 3.5"/>
<line x1="758" y1="259" x2="758" y2="510" stroke="#c81e1e" stroke-width="1.5" stroke-dasharray="10.5 2.5 3 3.5"/>
<line x1="813.4" y1="259" x2="813.4" y2="510" stroke="#c81e1e" stroke-width="1.5" stroke-dasharray="10.5 2.5 3 3.5"/>
<line x1="833.5" y1="259" x2="833.5" y2="382" stroke="#c81e1e" stroke-width="1.5" stroke-dasharray="10.5 2.5 3 3.5"/>
<line x1="869" y1="259" x2="869" y2="510" stroke="#c81e1e" stroke-width="1.5" stroke-dasharray="10.5 2.5 3 3.5"/>
<line x1="919" y1="259" x2="919" y2="510" stroke="#c81e1e" stroke-width="1.5" stroke-dasharray="10.5 2.5 3 3.5"/>
<line x1="974.6" y1="259" x2="974.6" y2="510" stroke="#c81e1e" stroke-width="1.5" stroke-dasharray="10.5 2.5 3 3.5"/>
<line x1="720.8" y1="425" x2="720.8" y2="498" stroke="#c81e1e" stroke-width="1.3" stroke-dasharray="10.5 2.5 3 3.5"/>
<line x1="850" y1="425" x2="850" y2="498" stroke="#c81e1e" stroke-width="1.3" stroke-dasharray="10.5 2.5 3 3.5"/>
<line x1="430.5" y1="319.1" x2="1032" y2="319.1" stroke="#c81e1e" stroke-width="1.5" stroke-dasharray="10.5 2.5 3 3.5"/>
<line x1="430.5" y1="366.6" x2="1032" y2="366.6" stroke="#c81e1e" stroke-width="1.5" stroke-dasharray="10.5 2.5 3 3.5"/>
<line x1="430.5" y1="386.5" x2="1032" y2="386.5" stroke="#c81e1e" stroke-width="1.5" stroke-dasharray="10.5 2.5 3 3.5"/>
<line x1="430.5" y1="435.8" x2="1032" y2="435.8" stroke="#c81e1e" stroke-width="1.5" stroke-dasharray="10.5 2.5 3 3.5"/>
<line x1="430.5" y1="448.4" x2="1032" y2="448.4" stroke="#c81e1e" stroke-width="1.5" stroke-dasharray="10.5 2.5 3 3.5"/>
<line x1="488" y1="331.0" x2="508" y2="331.0" stroke="#f4f4f4" stroke-width="0.9" />
<line x1="488" y1="333.3" x2="508" y2="333.3" stroke="#f4f4f4" stroke-width="0.9" />
<line x1="488" y1="335.6" x2="508" y2="335.6" stroke="#f4f4f4" stroke-width="0.9" />
<line x1="488" y1="337.9" x2="508" y2="337.9" stroke="#f4f4f4" stroke-width="0.9" />
<line x1="488" y1="340.2" x2="508" y2="340.2" stroke="#f4f4f4" stroke-width="0.9" />
<line x1="488" y1="342.5" x2="508" y2="342.5" stroke="#f4f4f4" stroke-width="0.9" />
<line x1="488" y1="344.8" x2="508" y2="344.8" stroke="#f4f4f4" stroke-width="0.9" />
<line x1="488" y1="347.1" x2="508" y2="347.1" stroke="#f4f4f4" stroke-width="0.9" />
<line x1="488" y1="349.4" x2="508" y2="349.4" stroke="#f4f4f4" stroke-width="0.9" />
<line x1="488" y1="351.7" x2="508" y2="351.7" stroke="#f4f4f4" stroke-width="0.9" />
<line x1="488" y1="354.0" x2="508" y2="354.0" stroke="#f4f4f4" stroke-width="0.9" />
<line x1="488" y1="356.3" x2="508" y2="356.3" stroke="#f4f4f4" stroke-width="0.9" />
<rect x="497" y="332" width="2.5" height="24" stroke="#f4f4f4" stroke-width="0.8" fill="#000"/>
<path d="M491 331 L491 325.5 L505 325.5 L505 331" stroke="#f4f4f4" stroke-width="0.9" fill="none" />
<rect x="489.5" y="358" width="17" height="5" stroke="#f4f4f4" stroke-width="0.9" fill="none"/>
<line x1="492" y1="360.5" x2="504" y2="360.5" stroke="#f4f4f4" stroke-width="0.8" />
<rect x="490" y="368" width="16" height="13" stroke="#f4f4f4" stroke-width="0.9" fill="none"/>
<path d="M491 378 L494 371 L498 378 M498 378 L502 371 L505 378" stroke="#f4f4f4" stroke-width="0.7" fill="none" />
<line x1="815" y1="339.7" x2="832" y2="339.7" stroke="#f4f4f4" stroke-width="1.2" />
<rect x="816" y="362" width="15" height="5" stroke="#f4f4f4" stroke-width="0.9" fill="none"/>
<rect x="844" y="362" width="15" height="5" stroke="#f4f4f4" stroke-width="0.9" fill="none"/>
<rect x="813" y="367" width="57" height="14.5" stroke="#f4f4f4" stroke-width="0.9" fill="none"/>
<path d="M817 378 L823 370 L830 378 M845 378 L851 370 L858 378" stroke="#f4f4f4" stroke-width="0.7" fill="none" />
<line x1="836" y1="327" x2="868" y2="327" stroke="#f4f4f4" stroke-width="1.3" />
<line x1="836" y1="331" x2="868" y2="331" stroke="#f4f4f4" stroke-width="1.3" />
<line x1="836" y1="336" x2="868" y2="336" stroke="#f4f4f4" stroke-width="1.3" />
<line x1="836" y1="341" x2="868" y2="341" stroke="#f4f4f4" stroke-width="1.3" />
<line x1="836" y1="346" x2="868" y2="346" stroke="#f4f4f4" stroke-width="1.3" />
<rect x="846" y="331" width="11" height="18" stroke="#f4f4f4" stroke-width="1.1" fill="#000"/>
<line x1="845" y1="320" x2="845" y2="331" stroke="#f4f4f4" stroke-width="0.8" />
<line x1="848" y1="320" x2="848" y2="331" stroke="#f4f4f4" stroke-width="0.8" />
<line x1="851" y1="320" x2="851" y2="331" stroke="#f4f4f4" stroke-width="0.8" />
<line x1="854" y1="320" x2="854" y2="331" stroke="#f4f4f4" stroke-width="0.8" />
<line x1="857" y1="320" x2="857" y2="331" stroke="#f4f4f4" stroke-width="0.8" />
<path d="M840 331 L840 324 L863 324 L863 331" stroke="#f4f4f4" stroke-width="0.8" fill="none" />
<line x1="835" y1="349.5" x2="868" y2="349.5" stroke="#f4f4f4" stroke-width="0.8" />
<rect x="818" y="350" width="12" height="3" fill="#e8e8e8"/>
<line x1="484" y1="266.6" x2="975.5" y2="266.6" stroke="#2ee02e" stroke-width="1.1" />
<line x1="484" y1="273.2" x2="975.5" y2="273.2" stroke="#2ee02e" stroke-width="1.1" />
<line x1="486.6" y1="273.2" x2="486.6" y2="283" stroke="#2ee02e" stroke-width="1" />
<line x1="509.7" y1="273.2" x2="509.7" y2="283" stroke="#2ee02e" stroke-width="1" />
<line x1="541.7" y1="273.2" x2="541.7" y2="283" stroke="#2ee02e" stroke-width="1" />
<line x1="597" y1="273.2" x2="597" y2="283" stroke="#2ee02e" stroke-width="1" />
<line x1="652.3" y1="273.2" x2="652.3" y2="283" stroke="#2ee02e" stroke-width="1" />
<line x1="702.8" y1="273.2" x2="702.8" y2="283" stroke="#2ee02e" stroke-width="1" />
<line x1="758" y1="273.2" x2="758" y2="283" stroke="#2ee02e" stroke-width="1" />
<line x1="813.4" y1="273.2" x2="813.4" y2="283" stroke="#2ee02e" stroke-width="1" />
<line x1="833.5" y1="273.2" x2="833.5" y2="283" stroke="#2ee02e" stroke-width="1" />
<line x1="869" y1="273.2" x2="869" y2="283" stroke="#2ee02e" stroke-width="1" />
<line x1="919" y1="273.2" x2="919" y2="283" stroke="#2ee02e" stroke-width="1" />
<line x1="974.6" y1="273.2" x2="974.6" y2="283" stroke="#2ee02e" stroke-width="1" />
<line x1="484.5" y1="265" x2="484.5" y2="283" stroke="#2ee02e" stroke-width="2.2" />
<line x1="975" y1="265" x2="975" y2="283" stroke="#2ee02e" stroke-width="2.2" />
<rect x="494.15" y="268.9" width="7" height="1.6" fill="#2ee02e" opacity="0.75" stroke="none"/>
<rect x="521.7" y="268.9" width="7" height="1.6" fill="#2ee02e" opacity="0.75" stroke="none"/>
<rect x="565.35" y="268.9" width="7" height="1.6" fill="#2ee02e" opacity="0.75" stroke="none"/>
<rect x="620.65" y="268.9" width="7" height="1.6" fill="#2ee02e" opacity="0.75" stroke="none"/>
<rect x="673.55" y="268.9" width="7" height="1.6" fill="#2ee02e" opacity="0.75" stroke="none"/>
<rect x="726.4" y="268.9" width="7" height="1.6" fill="#2ee02e" opacity="0.75" stroke="none"/>
<rect x="781.7" y="268.9" width="7" height="1.6" fill="#2ee02e" opacity="0.75" stroke="none"/>
<rect x="819.45" y="268.9" width="7" height="1.6" fill="#2ee02e" opacity="0.75" stroke="none"/>
<rect x="847.25" y="268.9" width="7" height="1.6" fill="#2ee02e" opacity="0.75" stroke="none"/>
<rect x="890.0" y="268.9" width="7" height="1.6" fill="#2ee02e" opacity="0.75" stroke="none"/>
<rect x="942.8" y="268.9" width="7" height="1.6" fill="#2ee02e" opacity="0.75" stroke="none"/>
<rect x="725" y="262" width="7" height="1.6" fill="#2ee02e" opacity="0.75" stroke="none"/>
<line x1="484" y1="498.3" x2="975.5" y2="498.3" stroke="#2ee02e" stroke-width="1.1" />
<line x1="484" y1="505.2" x2="975.5" y2="505.2" stroke="#2ee02e" stroke-width="1.1" />
<line x1="486.6" y1="489" x2="486.6" y2="498.3" stroke="#2ee02e" stroke-width="1" />
<line x1="541.7" y1="489" x2="541.7" y2="498.3" stroke="#2ee02e" stroke-width="1" />
<line x1="597" y1="489" x2="597" y2="498.3" stroke="#2ee02e" stroke-width="1" />
<line x1="652.3" y1="489" x2="652.3" y2="498.3" stroke="#2ee02e" stroke-width="1" />
<line x1="702.8" y1="489" x2="702.8" y2="498.3" stroke="#2ee02e" stroke-width="1" />
<line x1="720.4" y1="489" x2="720.4" y2="498.3" stroke="#2ee02e" stroke-width="1" />
<line x1="758" y1="489" x2="758" y2="498.3" stroke="#2ee02e" stroke-width="1" />
<line x1="813.4" y1="489" x2="813.4" y2="498.3" stroke="#2ee02e" stroke-width="1" />
<line x1="850" y1="489" x2="850" y2="498.3" stroke="#2ee02e" stroke-width="1" />
<line x1="869" y1="489" x2="869" y2="498.3" stroke="#2ee02e" stroke-width="1" />
<line x1="919" y1="489" x2="919" y2="498.3" stroke="#2ee02e" stroke-width="1" />
<line x1="974.6" y1="489" x2="974.6" y2="498.3" stroke="#2ee02e" stroke-width="1" />
<line x1="484.5" y1="489" x2="484.5" y2="506" stroke="#2ee02e" stroke-width="2.2" />
<line x1="975" y1="489" x2="975" y2="506" stroke="#2ee02e" stroke-width="2.2" />
<rect x="510.1500000000001" y="494" width="7" height="1.6" fill="#2ee02e" opacity="0.75" stroke="none"/>
<rect x="565.35" y="494" width="7" height="1.6" fill="#2ee02e" opacity="0.75" stroke="none"/>
<rect x="620.65" y="494" width="7" height="1.6" fill="#2ee02e" opacity="0.75" stroke="none"/>
<rect x="673.55" y="494" width="7" height="1.6" fill="#2ee02e" opacity="0.75" stroke="none"/>
<rect x="707.5999999999999" y="494" width="7" height="1.6" fill="#2ee02e" opacity="0.75" stroke="none"/>
<rect x="735.2" y="494" width="7" height="1.6" fill="#2ee02e" opacity="0.75" stroke="none"/>
<rect x="781.7" y="494" width="7" height="1.6" fill="#2ee02e" opacity="0.75" stroke="none"/>
<rect x="827.7" y="494" width="7" height="1.6" fill="#2ee02e" opacity="0.75" stroke="none"/>
<rect x="855.5" y="494" width="7" height="1.6" fill="#2ee02e" opacity="0.75" stroke="none"/>
<rect x="890.0" y="494" width="7" height="1.6" fill="#2ee02e" opacity="0.75" stroke="none"/>
<rect x="942.8" y="494" width="7" height="1.6" fill="#2ee02e" opacity="0.75" stroke="none"/>
<rect x="724" y="500.6" width="7" height="1.6" fill="#2ee02e" opacity="0.75" stroke="none"/>
<line x1="439.3" y1="316.3" x2="439.3" y2="451.2" stroke="#2ee02e" stroke-width="1.1" />
<line x1="445.4" y1="316.3" x2="445.4" y2="451.2" stroke="#2ee02e" stroke-width="1.1" />
<line x1="440" y1="319.1" x2="455" y2="319.1" stroke="#2ee02e" stroke-width="1" />
<line x1="440" y1="366.6" x2="455" y2="366.6" stroke="#2ee02e" stroke-width="1" />
<line x1="440" y1="386.5" x2="455" y2="386.5" stroke="#2ee02e" stroke-width="1" />
<line x1="440" y1="435.8" x2="455" y2="435.8" stroke="#2ee02e" stroke-width="1" />
<line x1="440" y1="448.4" x2="455" y2="448.4" stroke="#2ee02e" stroke-width="1" />
<line x1="436" y1="317" x2="455" y2="317" stroke="#2ee02e" stroke-width="2" />
<line x1="436" y1="450.5" x2="455" y2="450.5" stroke="#2ee02e" stroke-width="2" />
<rect x="441" y="338.85" width="1.6" height="7" fill="#2ee02e" opacity="0.75"/>
<rect x="441" y="372.55" width="1.6" height="7" fill="#2ee02e" opacity="0.75"/>
<rect x="441" y="407.15" width="1.6" height="7" fill="#2ee02e" opacity="0.75"/>
<rect x="441" y="438.1" width="1.6" height="7" fill="#2ee02e" opacity="0.75"/>
<rect x="433" y="382" width="3" height="9" fill="#2ee02e" opacity="0.85"/>
<line x1="1021" y1="316.5" x2="1021" y2="451" stroke="#2ee02e" stroke-width="1.1" />
<line x1="1027.8" y1="316.5" x2="1027.8" y2="451" stroke="#2ee02e" stroke-width="1.1" />
<line x1="1012" y1="319.1" x2="1030" y2="319.1" stroke="#2ee02e" stroke-width="1" />
<line x1="1012" y1="366.6" x2="1030" y2="366.6" stroke="#2ee02e" stroke-width="1" />
<line x1="1012" y1="386.5" x2="1030" y2="386.5" stroke="#2ee02e" stroke-width="1" />
<line x1="1012" y1="435.8" x2="1030" y2="435.8" stroke="#2ee02e" stroke-width="1" />
<line x1="1012" y1="448.4" x2="1030" y2="448.4" stroke="#2ee02e" stroke-width="1" />
<line x1="1012" y1="317" x2="1030" y2="317" stroke="#2ee02e" stroke-width="2" />
<line x1="1012" y1="450.5" x2="1030" y2="450.5" stroke="#2ee02e" stroke-width="2" />
<rect x="1017" y="338.85" width="1.6" height="7" fill="#2ee02e" opacity="0.75"/>
<rect x="1017" y="372.55" width="1.6" height="7" fill="#2ee02e" opacity="0.75"/>
<rect x="1017" y="407.15" width="1.6" height="7" fill="#2ee02e" opacity="0.75"/>
<rect x="1017" y="438.1" width="1.6" height="7" fill="#2ee02e" opacity="0.75"/>
<rect x="1022" y="381" width="2" height="9" fill="#2ee02e" opacity="0.85"/>
<line x1="482" y1="305.5" x2="515" y2="305.5" stroke="#2ee02e" stroke-width="1" />
<line x1="484.5" y1="301" x2="484.5" y2="312" stroke="#2ee02e" stroke-width="1" />
<line x1="487" y1="301" x2="487" y2="312" stroke="#2ee02e" stroke-width="1" />
<line x1="492" y1="301" x2="492" y2="312" stroke="#2ee02e" stroke-width="1" />
<line x1="505" y1="301" x2="505" y2="312" stroke="#2ee02e" stroke-width="1" />
<line x1="509.7" y1="301" x2="509.7" y2="312" stroke="#2ee02e" stroke-width="1" />
<line x1="511" y1="301" x2="511" y2="312" stroke="#2ee02e" stroke-width="1" />
<rect x="483" y="298" width="6" height="1.4" fill="#2ee02e" opacity="0.8"/><rect x="494" y="301" width="6" height="1.4" fill="#2ee02e" opacity="0.8"/><rect x="505" y="298" width="6" height="1.4" fill="#2ee02e" opacity="0.8"/>
<rect x="483.5" y="302" width="2" height="9" fill="#2ee02e" opacity="0.7"/>
<line x1="482" y1="377" x2="515" y2="377" stroke="#2ee02e" stroke-width="1" />
<line x1="484" y1="371" x2="484" y2="383" stroke="#2ee02e" stroke-width="1" />
<line x1="490" y1="371" x2="490" y2="383" stroke="#2ee02e" stroke-width="1" />
<line x1="506" y1="371" x2="506" y2="383" stroke="#2ee02e" stroke-width="1" />
<line x1="512" y1="371" x2="512" y2="383" stroke="#2ee02e" stroke-width="1" />
<rect x="494" y="379" width="7" height="1.4" fill="#2ee02e" opacity="0.8"/>
<rect x="482.5" y="372" width="1.6" height="9" fill="#2ee02e" opacity="0.8"/><rect x="511" y="372" width="1.6" height="9" fill="#2ee02e" opacity="0.8"/>
<line x1="810" y1="376" x2="871" y2="376" stroke="#2ee02e" stroke-width="0.9" />
<line x1="811" y1="371" x2="811" y2="381" stroke="#2ee02e" stroke-width="1" />
<line x1="816" y1="371" x2="816" y2="381" stroke="#2ee02e" stroke-width="1" />
<line x1="831" y1="371" x2="831" y2="381" stroke="#2ee02e" stroke-width="1" />
<line x1="844" y1="371" x2="844" y2="381" stroke="#2ee02e" stroke-width="1" />
<line x1="859" y1="371" x2="859" y2="381" stroke="#2ee02e" stroke-width="1" />
<line x1="870" y1="371" x2="870" y2="381" stroke="#2ee02e" stroke-width="1" />
<rect x="820" y="373" width="6" height="1.4" fill="#2ee02e" opacity="0.8"/>
<rect x="835" y="373" width="6" height="1.4" fill="#2ee02e" opacity="0.8"/>
<rect x="848" y="373" width="6" height="1.4" fill="#2ee02e" opacity="0.8"/>
<rect x="861" y="373" width="6" height="1.4" fill="#2ee02e" opacity="0.8"/>
<line x1="883.5" y1="316" x2="883.5" y2="368" stroke="#2ee02e" stroke-width="1" />
<line x1="888.5" y1="316" x2="888.5" y2="366" stroke="#2ee02e" stroke-width="1" />
<line x1="878" y1="316.5" x2="891" y2="316.5" stroke="#2ee02e" stroke-width="1.4" />
<line x1="878" y1="346" x2="891" y2="346" stroke="#2ee02e" stroke-width="1" />
<line x1="878" y1="366" x2="891" y2="366" stroke="#2ee02e" stroke-width="1" />
<rect x="886" y="328" width="1.4" height="7" fill="#2ee02e" opacity="0.8"/><rect x="886" y="352" width="1.4" height="6" fill="#2ee02e" opacity="0.8"/>
<rect x="871" y="368" width="10" height="14" stroke="#2ee02e" stroke-width="0.9" fill="none"/>
<rect x="875" y="371" width="1.4" height="7" fill="#2ee02e" opacity="0.8"/>
<rect x="874" y="358" width="2" height="8" fill="#f4f4f4"/>
<line x1="700.2" y1="425.4" x2="723" y2="425.4" stroke="#2ee02e" stroke-width="1" />
<line x1="700.2" y1="420" x2="700.2" y2="431" stroke="#2ee02e" stroke-width="1" />
<line x1="703.2" y1="420" x2="703.2" y2="431" stroke="#2ee02e" stroke-width="1" />
<line x1="711.2" y1="420" x2="711.2" y2="431" stroke="#2ee02e" stroke-width="1" />
<line x1="720" y1="420" x2="720" y2="431" stroke="#2ee02e" stroke-width="1" />
<line x1="723" y1="420" x2="723" y2="431" stroke="#2ee02e" stroke-width="1" />
<rect x="701.2" y="417" width="5" height="1.4" fill="#2ee02e" opacity="0.8"/><rect x="708.2" y="421" width="6" height="1.4" fill="#2ee02e" opacity="0.8"/><rect x="717" y="417" width="5" height="1.4" fill="#2ee02e" opacity="0.8"/>
<rect x="707.2" y="428" width="8" height="2" fill="#f4f4f4"/>
<rect x="707.2" y="462.5" width="8" height="1.6" fill="#f4f4f4"/>
<line x1="700.2" y1="470" x2="723" y2="470" stroke="#2ee02e" stroke-width="1" />
<line x1="700.2" y1="465" x2="700.2" y2="475" stroke="#2ee02e" stroke-width="1" />
<line x1="703.2" y1="465" x2="703.2" y2="475" stroke="#2ee02e" stroke-width="1" />
<line x1="711.2" y1="465" x2="711.2" y2="475" stroke="#2ee02e" stroke-width="1" />
<line x1="720" y1="465" x2="720" y2="475" stroke="#2ee02e" stroke-width="1" />
<line x1="723" y1="465" x2="723" y2="475" stroke="#2ee02e" stroke-width="1" />
<rect x="708.2" y="469" width="6" height="1.4" fill="#2ee02e" opacity="0.8"/>
<line x1="848.5" y1="425.4" x2="870.8" y2="425.4" stroke="#2ee02e" stroke-width="1" />
<line x1="848.5" y1="420" x2="848.5" y2="431" stroke="#2ee02e" stroke-width="1" />
<line x1="851.5" y1="420" x2="851.5" y2="431" stroke="#2ee02e" stroke-width="1" />
<line x1="859.5" y1="420" x2="859.5" y2="431" stroke="#2ee02e" stroke-width="1" />
<line x1="867.8" y1="420" x2="867.8" y2="431" stroke="#2ee02e" stroke-width="1" />
<line x1="870.8" y1="420" x2="870.8" y2="431" stroke="#2ee02e" stroke-width="1" />
<rect x="849.5" y="417" width="5" height="1.4" fill="#2ee02e" opacity="0.8"/><rect x="856.5" y="421" width="6" height="1.4" fill="#2ee02e" opacity="0.8"/><rect x="864.8" y="417" width="5" height="1.4" fill="#2ee02e" opacity="0.8"/>
<rect x="855.5" y="428" width="8" height="2" fill="#f4f4f4"/>
<rect x="855.5" y="462.5" width="8" height="1.6" fill="#f4f4f4"/>
<line x1="848.5" y1="470" x2="870.8" y2="470" stroke="#2ee02e" stroke-width="1" />
<line x1="848.5" y1="465" x2="848.5" y2="475" stroke="#2ee02e" stroke-width="1" />
<line x1="851.5" y1="465" x2="851.5" y2="475" stroke="#2ee02e" stroke-width="1" />
<line x1="859.5" y1="465" x2="859.5" y2="475" stroke="#2ee02e" stroke-width="1" />
<line x1="867.8" y1="465" x2="867.8" y2="475" stroke="#2ee02e" stroke-width="1" />
<line x1="870.8" y1="465" x2="870.8" y2="475" stroke="#2ee02e" stroke-width="1" />
<rect x="856.5" y="469" width="6" height="1.4" fill="#2ee02e" opacity="0.8"/>
<line x1="693.3" y1="433" x2="693.3" y2="462" stroke="#2ee02e" stroke-width="1" />
<line x1="689" y1="433.5" x2="698" y2="433.5" stroke="#2ee02e" stroke-width="1" />
<line x1="689" y1="461.5" x2="698" y2="461.5" stroke="#2ee02e" stroke-width="1" />
<line x1="689" y1="445" x2="698" y2="445" stroke="#2ee02e" stroke-width="1" />
<rect x="689" y="437" width="1.4" height="5" fill="#2ee02e" opacity="0.8"/><rect x="689" y="450" width="1.4" height="7" fill="#2ee02e" opacity="0.8"/>
<line x1="879.3" y1="433" x2="879.3" y2="462" stroke="#2ee02e" stroke-width="1" />
<line x1="874" y1="433.5" x2="884" y2="433.5" stroke="#2ee02e" stroke-width="1" />
<line x1="874" y1="461.5" x2="884" y2="461.5" stroke="#2ee02e" stroke-width="1" />
<line x1="874" y1="445" x2="884" y2="445" stroke="#2ee02e" stroke-width="1" />
<rect x="875" y="437" width="1.4" height="5" fill="#2ee02e" opacity="0.8"/><rect x="875" y="450" width="1.4" height="7" fill="#2ee02e" opacity="0.8"/>
<circle cx="486.6" cy="254.9" r="3.7" stroke="#f4f4f4" stroke-width="1.1" fill="#000"/>
<line x1="486.1" y1="252.9" x2="486.1" y2="256.9" stroke="#888" stroke-width="1"/>
<circle cx="509.7" cy="254.9" r="3.7" stroke="#f4f4f4" stroke-width="1.1" fill="#000"/>
<line x1="509.2" y1="252.9" x2="509.2" y2="256.9" stroke="#888" stroke-width="1"/>
<circle cx="541.7" cy="254.9" r="3.7" stroke="#f4f4f4" stroke-width="1.1" fill="#000"/>
<line x1="541.2" y1="252.9" x2="541.2" y2="256.9" stroke="#888" stroke-width="1"/>
<circle cx="597" cy="254.9" r="3.7" stroke="#f4f4f4" stroke-width="1.1" fill="#000"/>
<line x1="596.5" y1="252.9" x2="596.5" y2="256.9" stroke="#888" stroke-width="1"/>
<circle cx="652.3" cy="254.9" r="3.7" stroke="#f4f4f4" stroke-width="1.1" fill="#000"/>
<line x1="651.8" y1="252.9" x2="651.8" y2="256.9" stroke="#888" stroke-width="1"/>
<circle cx="702.8" cy="254.9" r="3.7" stroke="#f4f4f4" stroke-width="1.1" fill="#000"/>
<line x1="702.3" y1="252.9" x2="702.3" y2="256.9" stroke="#888" stroke-width="1"/>
<circle cx="758" cy="254.9" r="3.7" stroke="#f4f4f4" stroke-width="1.1" fill="#000"/>
<line x1="757.5" y1="252.9" x2="757.5" y2="256.9" stroke="#888" stroke-width="1"/>
<circle cx="813.4" cy="254.9" r="3.7" stroke="#f4f4f4" stroke-width="1.1" fill="#000"/>
<line x1="812.9" y1="252.9" x2="812.9" y2="256.9" stroke="#888" stroke-width="1"/>
<circle cx="833.5" cy="254.9" r="3.7" stroke="#f4f4f4" stroke-width="1.1" fill="#000"/>
<line x1="833.0" y1="252.9" x2="833.0" y2="256.9" stroke="#888" stroke-width="1"/>
<circle cx="869" cy="254.9" r="3.7" stroke="#f4f4f4" stroke-width="1.1" fill="#000"/>
<line x1="868.5" y1="252.9" x2="868.5" y2="256.9" stroke="#888" stroke-width="1"/>
<circle cx="919" cy="254.9" r="3.7" stroke="#f4f4f4" stroke-width="1.1" fill="#000"/>
<line x1="918.5" y1="252.9" x2="918.5" y2="256.9" stroke="#888" stroke-width="1"/>
<circle cx="974.6" cy="254.9" r="3.7" stroke="#f4f4f4" stroke-width="1.1" fill="#000"/>
<line x1="974.1" y1="252.9" x2="974.1" y2="256.9" stroke="#888" stroke-width="1"/>
<circle cx="487" cy="514" r="3.7" stroke="#f4f4f4" stroke-width="1.1" fill="#000"/>
<line x1="486.5" y1="512" x2="486.5" y2="516" stroke="#888" stroke-width="1"/>
<circle cx="541.7" cy="514" r="3.7" stroke="#f4f4f4" stroke-width="1.1" fill="#000"/>
<line x1="541.2" y1="512" x2="541.2" y2="516" stroke="#888" stroke-width="1"/>
<circle cx="597" cy="514" r="3.7" stroke="#f4f4f4" stroke-width="1.1" fill="#000"/>
<line x1="596.5" y1="512" x2="596.5" y2="516" stroke="#888" stroke-width="1"/>
<circle cx="652.3" cy="514" r="3.7" stroke="#f4f4f4" stroke-width="1.1" fill="#000"/>
<line x1="651.8" y1="512" x2="651.8" y2="516" stroke="#888" stroke-width="1"/>
<circle cx="702.8" cy="514" r="3.7" stroke="#f4f4f4" stroke-width="1.1" fill="#000"/>
<line x1="702.3" y1="512" x2="702.3" y2="516" stroke="#888" stroke-width="1"/>
<circle cx="758" cy="514" r="3.7" stroke="#f4f4f4" stroke-width="1.1" fill="#000"/>
<line x1="757.5" y1="512" x2="757.5" y2="516" stroke="#888" stroke-width="1"/>
<circle cx="813.4" cy="514" r="3.7" stroke="#f4f4f4" stroke-width="1.1" fill="#000"/>
<line x1="812.9" y1="512" x2="812.9" y2="516" stroke="#888" stroke-width="1"/>
<circle cx="869" cy="514" r="3.7" stroke="#f4f4f4" stroke-width="1.1" fill="#000"/>
<line x1="868.5" y1="512" x2="868.5" y2="516" stroke="#888" stroke-width="1"/>
<circle cx="919" cy="514" r="3.7" stroke="#f4f4f4" stroke-width="1.1" fill="#000"/>
<line x1="918.5" y1="512" x2="918.5" y2="516" stroke="#888" stroke-width="1"/>
<circle cx="974.6" cy="514" r="3.7" stroke="#f4f4f4" stroke-width="1.1" fill="#000"/>
<line x1="974.1" y1="512" x2="974.1" y2="516" stroke="#888" stroke-width="1"/>
<circle cx="426.3" cy="319.1" r="3.7" stroke="#f4f4f4" stroke-width="1.1" fill="#000"/>
<line x1="425.8" y1="317.1" x2="425.8" y2="321.1" stroke="#888" stroke-width="1"/>
<circle cx="1036.4" cy="319.1" r="3.7" stroke="#f4f4f4" stroke-width="1.1" fill="#000"/>
<line x1="1035.9" y1="317.1" x2="1035.9" y2="321.1" stroke="#888" stroke-width="1"/>
<circle cx="426.3" cy="366.6" r="3.7" stroke="#f4f4f4" stroke-width="1.1" fill="#000"/>
<line x1="425.8" y1="364.6" x2="425.8" y2="368.6" stroke="#888" stroke-width="1"/>
<circle cx="1036.4" cy="366.6" r="3.7" stroke="#f4f4f4" stroke-width="1.1" fill="#000"/>
<line x1="1035.9" y1="364.6" x2="1035.9" y2="368.6" stroke="#888" stroke-width="1"/>
<circle cx="426.3" cy="386.5" r="3.7" stroke="#f4f4f4" stroke-width="1.1" fill="#000"/>
<line x1="425.8" y1="384.5" x2="425.8" y2="388.5" stroke="#888" stroke-width="1"/>
<circle cx="1036.4" cy="386.5" r="3.7" stroke="#f4f4f4" stroke-width="1.1" fill="#000"/>
<line x1="1035.9" y1="384.5" x2="1035.9" y2="388.5" stroke="#888" stroke-width="1"/>
<circle cx="426.3" cy="435.8" r="3.7" stroke="#f4f4f4" stroke-width="1.1" fill="#000"/>
<line x1="425.8" y1="433.8" x2="425.8" y2="437.8" stroke="#888" stroke-width="1"/>
<circle cx="1036.4" cy="435.8" r="3.7" stroke="#f4f4f4" stroke-width="1.1" fill="#000"/>
<line x1="1035.9" y1="433.8" x2="1035.9" y2="437.8" stroke="#888" stroke-width="1"/>
<circle cx="426.3" cy="448.4" r="3.7" stroke="#f4f4f4" stroke-width="1.1" fill="#000"/>
<line x1="425.8" y1="446.4" x2="425.8" y2="450.4" stroke="#888" stroke-width="1"/>
<circle cx="1036.4" cy="448.4" r="3.7" stroke="#f4f4f4" stroke-width="1.1" fill="#000"/>
<line x1="1035.9" y1="446.4" x2="1035.9" y2="450.4" stroke="#888" stroke-width="1"/>
<g transform="translate(727.1,236.4) rotate(0)"><path d="M-3.2 4.2 A5.3 5.3 0 1 1 3.2 4.2 L0 8.2 Z" stroke="#f4f4f4" stroke-width="1.1" fill="#000"/><path d="M-2.5 4.8 L0 8 L2.5 4.8 Z" fill="#f4f4f4"/><circle cx="-2" cy="-0.5" r="0.6" fill="#ddd"/></g>
<g transform="translate(727.1,590.5) rotate(180)"><path d="M-3.2 4.2 A5.3 5.3 0 1 1 3.2 4.2 L0 8.2 Z" stroke="#f4f4f4" stroke-width="1.1" fill="#000"/><path d="M-2.5 4.8 L0 8 L2.5 4.8 Z" fill="#f4f4f4"/><circle cx="-2" cy="-0.5" r="0.6" fill="#ddd"/></g>
<g transform="translate(407.3,386.7) rotate(-90)"><path d="M-3.2 4.2 A5.3 5.3 0 1 1 3.2 4.2 L0 8.2 Z" stroke="#f4f4f4" stroke-width="1.1" fill="#000"/><path d="M-2.5 4.8 L0 8 L2.5 4.8 Z" fill="#f4f4f4"/><circle cx="-2" cy="-0.5" r="0.6" fill="#ddd"/></g>
<g transform="translate(1062,386.5) rotate(90)"><path d="M-3.2 4.2 A5.3 5.3 0 1 1 3.2 4.2 L0 8.2 Z" stroke="#f4f4f4" stroke-width="1.1" fill="#000"/><path d="M-2.5 4.8 L0 8 L2.5 4.8 Z" fill="#f4f4f4"/><circle cx="-2" cy="-0.5" r="0.6" fill="#ddd"/></g>
<rect x="782" y="397" width="7" height="2" fill="#ccc"/></svg></div></div>
<!-- drawing window controls -->
<div class="a" style="left:1208px;top:156px;width:10px;height:3px;background:#f0f0f0"></div>
<svg style="left:1222px;top:148px" width="32" height="14" viewBox="0 0 32 14">
 <rect x="2.5" y="4.5" width="6" height="6" fill="none" stroke="#f0f0f0" stroke-width="2"/>
 <path d="M5 2 L11 2 L11 8" fill="none" stroke="#f0f0f0" stroke-width="1.5"/>
 <path d="M19 2.5 L27 10.5 M27 2.5 L19 10.5" stroke="#f0f0f0" stroke-width="2.2"/>
</svg>
<!-- navigation bar -->
<div class="a" style="left:1223px;top:169px;width:29px;height:100px;border-radius:4px;background:#4b4b4b;border:1px solid #5a5a5a"></div>
<svg style="left:1223px;top:169px" width="29" height="100" viewBox="0 0 29 100">
 <path d="M21 2 L25 6 M25 2 L21 6" stroke="#cfcfcf" stroke-width="1.1"/>
 <path d="M6 26 Q4 18 9 14.5 Q13 12 18 13 Q21 14 21 20 L21 27 Q20 33 14 33 Q8 33 6 26 Z" fill="#b9b9b9"/>
 <circle cx="13" cy="22" r="3.8" fill="#c9c9c9" stroke="#333" stroke-width="1"/>
 <path d="M10.5 25 L8 28" stroke="#333" stroke-width="1.2"/>
 <text x="14" y="34" font-family="Liberation Sans" font-weight="bold" font-style="italic" font-size="8" fill="#2a5bb0">2D</text>
 <line x1="3" y1="49.5" x2="26" y2="49.5" stroke="#3c3c3c"/>
 <line x1="3" y1="50.5" x2="26" y2="50.5" stroke="#595959"/>
 <rect x="7" y="57" width="10" height="10" fill="#7fb35a" stroke="#5a8a3a" stroke-width="0.8"/>
 <circle cx="17" cy="67" r="2.6" fill="#c8c8c8" stroke="#888" stroke-width="0.6"/>
 <path d="M20.5 91 L25.5 91 L23 95 Z M21 89 L25 89" stroke="#bdbdbd" fill="#bdbdbd" stroke-width="0.8"/>
</svg>

<!-- right scrollbar -->
<div class="a" style="left:1253px;top:142px;width:16px;height:593px;background:linear-gradient(90deg,#e9e9e9,#f3f3f3 40%,#eeeeee)"></div>
<svg style="left:1255px;top:148px" width="12" height="8"><path d="M2 6 L6 2 L10 6 Z" fill="#333"/></svg>
<div class="a" style="left:1254px;top:423px;width:13px;height:14px;border:1px solid #b8b8b8;border-radius:2px;background:linear-gradient(90deg,#fbfbfb,#e8e8e8 50%,#d8d8d8)"></div>
<svg style="left:1256px;top:708px" width="12" height="6"><path d="M1.5 1 L8 1 L4.7 4.5 Z" fill="#333"/></svg>
<!-- view control bar -->
<div class="a" style="left:0;top:718px;width:1253px;height:17px;background:linear-gradient(#f8f8f8,#f2f2f2);border-top:1px solid #fff;border-bottom:1px solid #d8d8d8"></div>
<div class="a" style="left:286px;top:719px;width:967px;height:15px;background:linear-gradient(#f2f2f2,#ebebeb)"></div>
<div class="a" style="left:1253px;top:718px;width:16px;height:17px;background:#f0f0f0;border-bottom:1px solid #d8d8d8"></div>
<div class="t" style="left:16px;top:719px;color:#111;word-spacing:2.5px">1 : 100</div>
<svg style="left:60px;top:718px" width="230" height="16" viewBox="0 0 230 16">
 <rect x="8.5" y="1.5" width="13" height="10" fill="#f2f4f8" stroke="#3a3a3a"/>
 <path d="M27.5 5.5 L31 2.5 L40.5 2.5 L40.5 9.5 L37 12.5 L27.5 12.5 Z M27.5 5.5 L37 5.5 L37 12.5 M37 5.5 L40.5 2.5" fill="#e6e8ec" stroke="#333"/>
 <circle cx="50" cy="6" r="4" fill="#f4d04a" stroke="#d8a010"/>
 <path d="M51 8 L57 13.5 M57 8 L51 13.5" stroke="#e01b1b" stroke-width="1.8"/>
 <circle cx="69" cy="5" r="3.5" fill="#cfe6fb" stroke="#3d7fd0" stroke-width="1.1"/>
 <path d="M64 12 L70 12" stroke="#333"/>
 <path d="M71 8 L77 13.5 M77 8 L71 13.5" stroke="#e01b1b" stroke-width="1.8"/>
 <path d="M82 9 L87 9 L87 3 M85 5 L93 5 L93 11" stroke="#2a6fc8" stroke-width="1.3" fill="none"/>
 <path d="M89 8 L95 13.5 M95 8 L89 13.5" stroke="#e01b1b" stroke-width="1.8"/>
 <path d="M100 9 L105 9 L105 3 M103 5 L110 5 L110 11" stroke="#2a6fc8" stroke-width="1.3" fill="none"/>
 <path d="M105 8 L108 8 L108 12" stroke="#e01b1b" stroke-width="1.2" fill="none"/>
 <circle cx="112" cy="6" r="2.5" fill="#bfe0fa" stroke="#3d7fd0"/>
 <path d="M119 6 Q123 2 127 6 Q131 10 134 6 M124 8 Q127 12 131 9" stroke="#333" fill="none" stroke-width="1"/>
 <circle cx="145" cy="6" r="2.3" fill="#bfe0fa" stroke="#3d7fd0"/>
 <path d="M145 9 L145 11" stroke="#3d7fd0"/>
 <path d="M157 8 Q157 3 162 3 L165 3" stroke="#2ea52e" stroke-width="1.5" fill="none"/>
 <circle cx="160" cy="9" r="3.5" fill="#bfe0fa" stroke="#3d7fd0" stroke-width="1.2"/>
 <path d="M163 7 L169 12.5 M169 7 L163 12.5" stroke="#e01b1b" stroke-width="1.8"/>
 <rect x="176.5" y="3.5" width="11" height="8" fill="none" stroke="#222" stroke-dasharray="2 1"/>
 <circle cx="186" cy="10" r="2" fill="#fff" stroke="#333"/>
 <path d="M194 12 L194 6 L200 2 L206 6 L206 12 M197 12 L197 7 M200 12 L200 5 M203 12 L203 7" stroke="#c02020" stroke-width="1" fill="none"/>
 <path d="M194 6 L200 2 L206 6" stroke="#333" fill="none"/>
 <circle cx="205" cy="7" r="2.8" fill="#bfe0fa" stroke="#3d7fd0" stroke-width="1.1"/>
 <path d="M219 5 L216 8 L219 11 Z" fill="#333"/>
</svg>
<div class="a" style="left:755px;top:719px;width:14px;height:13px;border:1px solid #a9a9a9;border-radius:2px;background:linear-gradient(#fafafa,#e4e4e4 50%,#d8d8d8)"></div>
<svg style="left:1242px;top:721px" width="8" height="9"><path d="M2 1 L6 4.5 L2 8 Z" fill="#333"/></svg>
<svg style="left:1256px;top:722px" width="12" height="12"><path d="M9 2 L10 2 M7 5 L8 5 M9 5 L10 5 M5 8 L6 8 M7 8 L8 8 M9 8 L10 8" stroke="#aaa"/></svg>
<!-- status bar -->
<div class="a" style="left:0;top:735px;width:1269px;height:20px;background:linear-gradient(#eeeeee,#e4e4e4 60%,#dedede);border-top:1px solid #cfcfcf"></div>
<div class="t" style="left:-1px;top:739px;color:#1a1a1a;width:488px;overflow:hidden;word-spacing:1.3px">单击可进行选择; 按 Tab 键并单击可选择其他项目; 按 Ctrl 键并单击可将新项目添加到选择集; 按 Shift 键并单击可</div>
<svg style="left:490px;top:736px" width="16" height="18" viewBox="0 0 16 18">
 <path d="M6 3 L9 1.5 L12 3 L12 8 L9 9.5 L6 8 Z" fill="#7fc25a" stroke="#3f8a2a" stroke-width="0.8"/>
 <path d="M1 7 L4 5.5 L7 7 L7 15 L4 16.5 L1 15 Z" fill="#bfe0f5" stroke="#2f78c8" stroke-width="0.9"/>
 <path d="M9 9 Q9 7.5 10.5 7.5 L10.5 10 L11.5 10 L11.5 7.5 Q13 7.5 13 9 Q13 10.3 12 11 L12 16 Q11 17 10 16 L10 11 Q9 10.3 9 9 Z" fill="#d8dde4" stroke="#555" stroke-width="0.8"/>
</svg>
<div class="a" style="left:511px;top:737px;width:182px;height:18px;background:#fff;border-left:1px solid #e0e0e0"></div>
<div class="t" style="left:514px;top:740px;color:#111">设备</div>
<svg style="left:682px;top:744px" width="8" height="5"><path d="M0.5 0.5 L7.5 0.5 L4 4.5 Z" fill="#111"/></svg>
<svg style="left:698px;top:736px" width="95" height="18" viewBox="0 0 95 18">
 <path d="M6 4 L12 2 L14 5 L9 8 L7 8 Z" fill="#f2f2f2" stroke="#555" stroke-width="1"/>
 <path d="M8 8 L6 14 L3 14 M4 16 L9 16" stroke="#555" fill="none" stroke-width="1"/>
 <text x="21" y="13" font-family="Liberation Sans" font-size="11" fill="#222">:0</text>
 <line x1="42.5" y1="1" x2="42.5" y2="17" stroke="#cfcfcf"/>
 <rect x="50.5" y="3.5" width="13" height="11" fill="#f8f8f8" stroke="#333"/>
 <rect x="50.5" y="3.5" width="13" height="2" fill="#555"/>
 <path d="M53 8 L54 8 M55.5 8 L61 8 M53 10.5 L54 10.5 M55.5 10.5 L61 10.5 M53 13 L54 13 M55.5 13 L61 13" stroke="#333"/>
 <rect x="73" y="3" width="13" height="11" fill="#b9b9b9"/>
 <path d="M77 9 L84 9 L81 6 M84 9 L81 12" stroke="#e8e8e8" fill="none"/>
</svg>
<div class="a" style="left:790px;top:737px;width:139px;height:18px;background:linear-gradient(#fbfbfb,#f4f4f4);border-left:1px solid #d8d8d8"></div>
<div class="t" style="left:793px;top:740px;color:#9a9a9a">主模型</div>
<svg style="left:917px;top:744px" width="8" height="5"><path d="M0.5 0.5 L7.5 0.5 L4 4.5 Z" fill="#9a9a9a"/></svg>
<div class="a" style="left:1000px;top:739px;width:12px;height:12px;background:linear-gradient(#f6f6f6,#e6e6e6);border:1px solid #555"></div>
<div class="t" style="left:1015px;top:739px;color:#111">仅可编辑项</div>
<svg style="left:1072px;top:736px" width="145" height="18" viewBox="0 0 145 18">
 <ellipse cx="6" cy="6" rx="4" ry="2.5" fill="none" stroke="#d7a80f" stroke-width="1.6"/>
 <ellipse cx="12" cy="6" rx="4" ry="2.5" fill="none" stroke="#d7a80f" stroke-width="1.6"/>
 <path d="M9 7 L9 16 L11.5 13.5 L13.5 17 L15 16 L13 12.5 L16 12.5 Z" fill="#fff" stroke="#333" stroke-width="0.9"/>
 <path d="M28 12 L34 4 L40 4 L36 12 Z" fill="#e6eef8" stroke="#2a6fc8" stroke-width="1"/>
 <path d="M26 10 L32 10" stroke="#2a6fc8"/>
 <path d="M36 7 L36 16 L38.5 13.5 L40.5 17 L42 16 L40 12.5 L43 12.5 Z" fill="#fff" stroke="#333" stroke-width="0.9"/>
 <rect x="49" y="4" width="8" height="3" fill="#e05a5a"/><rect x="49" y="9" width="8" height="3" fill="#e05a5a"/>
 <path d="M51 3 L51 15 M55 3 L55 15" stroke="#b02020"/>
 <path d="M57 2 L62 7 M62 2 L57 7" stroke="#e01b1b" stroke-width="1.6"/>
 <path d="M58 7 L58 16 L60.5 13.5 L62.5 17 L64 16 L62 12.5 L65 12.5 Z" fill="#fff" stroke="#333" stroke-width="0.9"/>
 <path d="M71 4 L77 2 L77 14 L71 16 Z" fill="#e6eef8" stroke="#2a6fc8" stroke-width="1"/>
 <path d="M80 2 L85 7 M85 2 L80 7" stroke="#e01b1b" stroke-width="1.6"/>
 <path d="M80 7 L80 16 L82.5 13.5 L84.5 17 L86 16 L84 12.5 L87 12.5 Z" fill="#fff" stroke="#333" stroke-width="0.9"/>
 <path d="M96 3 L96 11 M92 7 L100 7 M94 4 L96 2 L98 4 M94 10 L96 12 L98 10" stroke="#222" stroke-width="1.1" fill="none"/>
 <path d="M101 6 L101 16 L103.5 13.5 L105.5 17 L107 16 L105 12.5 L108 12.5 Z" fill="#fff" stroke="#333" stroke-width="0.9"/>
 <path d="M114 3 L128 3 L123 9 L123 15 L119 13 L119 9 Z" fill="#f8f8f8" stroke="#444" stroke-width="1"/>
 <text x="129" y="16" font-family="Liberation Sans" font-size="11" fill="#222">:0</text>
</svg>

</div>
</body></html>
